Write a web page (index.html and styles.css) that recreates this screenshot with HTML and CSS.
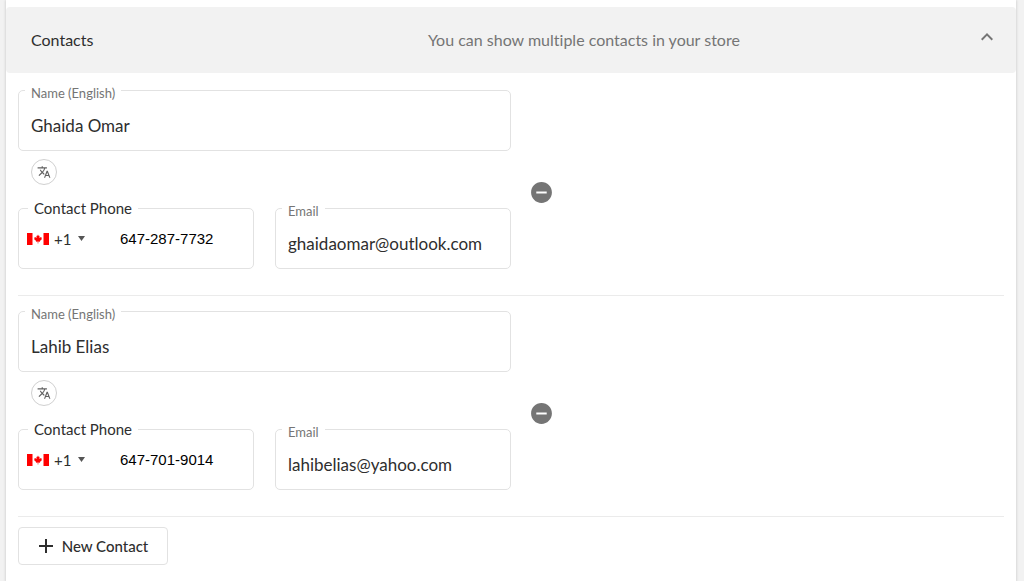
FILE: index.html
```html
<!DOCTYPE html>
<html lang="en">
<head>
    <meta charset="UTF-8">
    <meta name="viewport" content="width=device-width, initial-scale=1.0">
    <title>Store Contacts</title>
    <link rel="stylesheet" href="styles.css">
</head>
<body>
    <!-- Shared icons -->
    <svg class="sprite" aria-hidden="true">
        <symbol id="icon-translate" viewBox="0 0 24 24">
            <path d="M12.87 15.07l-2.54-2.51.03-.03c1.74-1.94 2.98-4.17 3.71-6.53H17V4h-7V2H8v2H1v1.99h11.17C11.5 7.92 10.44 9.75 9 11.35 8.07 10.32 7.3 9.19 6.69 8h-2c.73 1.63 1.73 3.17 2.98 4.56l-5.09 5.02L4 19l5-5 3.11 3.11.76-2.04zM18.5 10h-2L12 22h2l1.12-3h4.75L21 22h2l-4.5-12zm-2.62 7l1.62-4.33L19.12 17h-3.24z"/>
        </symbol>
        <symbol id="icon-remove" viewBox="0 0 24 24">
            <path d="M12 2C6.48 2 2 6.48 2 12s4.48 10 10 10 10-4.48 10-10S17.52 2 12 2zm5 11H7v-2h10v2z"/>
        </symbol>
        <symbol id="flag-ca" viewBox="0 0 22 12">
            <path fill="#fff" d="M0 0h22v12H0z"/>
            <path fill="#f00" d="M0 0h5.5v12H0zM16.5 0H22v12h-5.5z"/>
            <path fill="#f00" d="M11 1.5l.8 1.6.8-.4-.3 2.2 1.1-1 .3.7 1.2-.2-.4 1.3.5.4-2.1 2 .2.700-1.800-.2v2h-.6v-2l-1.800.2.2-.7-2.100-2 .5-.4-.4-1.300 1.200.2.300-.7 1.100 1-.3-2.200.8.4z"/>
        </symbol>
    </svg>

    <main class="panel">
        <header class="panel-header">
            <h2 class="panel-title">Contacts</h2>
            <p class="panel-hint">You can show multiple contacts in your store</p>
            <button class="collapse-btn" type="button" aria-label="Collapse contacts">
                <svg viewBox="0 0 24 24"><path d="M12 8l-6 6 1.41 1.41L12 10.83l4.59 4.58L18 14z"/></svg>
            </button>
        </header>

        <form class="contacts">
            <section class="contact">
                <div class="contact-fields">
                    <div class="field">
                        <label for="name-1">Name (English)</label>
                        <input id="name-1" type="text" value="Ghaida Omar">
                    </div>
                    <button class="translate-btn" type="button" aria-label="Translate name">
                        <svg><use href="#icon-translate"/></svg>
                    </button>
                    <div class="field-row">
                        <div class="field phone">
                            <label for="phone-1">Contact Phone</label>
                            <svg class="flag"><use href="#flag-ca"/></svg>
                            <select aria-label="Country code">
                                <option>+1</option>
                            </select>
                            <svg class="caret" viewBox="0 0 7 5"><path d="M0 0h7L3.5 5z"/></svg>
                            <input id="phone-1" type="tel" value="647-287-7732">
                        </div>
                        <div class="field">
                            <label for="email-1">Email</label>
                            <input id="email-1" type="email" value="ghaidaomar@outlook.com">
                        </div>
                    </div>
                </div>
                <button class="remove-btn" type="button" aria-label="Remove contact">
                    <svg><use href="#icon-remove"/></svg>
                </button>
            </section>

            <section class="contact">
                <div class="contact-fields">
                    <div class="field">
                        <label for="name-2">Name (English)</label>
                        <input id="name-2" type="text" value="Lahib Elias">
                    </div>
                    <button class="translate-btn" type="button" aria-label="Translate name">
                        <svg><use href="#icon-translate"/></svg>
                    </button>
                    <div class="field-row">
                        <div class="field phone">
                            <label for="phone-2">Contact Phone</label>
                            <svg class="flag"><use href="#flag-ca"/></svg>
                            <select aria-label="Country code">
                                <option>+1</option>
                            </select>
                            <svg class="caret" viewBox="0 0 7 5"><path d="M0 0h7L3.5 5z"/></svg>
                            <input id="phone-2" type="tel" value="647-701-9014">
                        </div>
                        <div class="field">
                            <label for="email-2">Email</label>
                            <input id="email-2" type="email" value="lahibelias@yahoo.com">
                        </div>
                    </div>
                </div>
                <button class="remove-btn" type="button" aria-label="Remove contact">
                    <svg><use href="#icon-remove"/></svg>
                </button>
            </section>

            <button class="add-btn" type="button">
                <svg viewBox="0 0 16 16"><path d="M7 1h2v6h6v2H9v6H7V9H1V7h6z"/></svg>
                New Contact
            </button>
        </form>
    </main>
</body>
</html>
```
FILE: styles.css
```css
* {
    box-sizing: border-box;
}
body {
    margin: 0;
    padding: 0 8px 0 6px;
    background: #f2f2f2;
    color: #2e2e2e;
    font-family: Lato, 'Noto Sans', sans-serif;
    font-size: 16px;
    font-variant-ligatures: none;
}
button,
input,
select {
    font: inherit;
    color: inherit;
}
button {
    display: flex;
    align-items: center;
    justify-content: center;
    padding: 0;
    border: none;
    background: none;
    cursor: pointer;
}
svg {
    display: block;
    fill: currentColor;
}
.sprite {
    position: absolute;
    width: 0;
    height: 0;
}
.panel {
    min-height: 100vh;
    padding-top: 7px;
    background: #fff;
    box-shadow: 0 0 3px rgba(0, 0, 0, 0.2);
}
.panel-header {
    display: flex;
    align-items: center;
    height: 66px;
    padding: 0 17px 0 25px;
    border-radius: 4px;
    background: #f2f2f2;
}
.panel-title,
.panel-hint {
    margin: 0;
    padding-bottom: 2px;
    font-size: 16px;
    font-weight: 400;
}
.panel-title {
    flex: 0 0 41%;
}
.panel-hint {
    color: #757575;
}
.collapse-btn {
    margin: 0 0 6px auto;
    color: #757575;
}
.collapse-btn svg {
    width: 24px;
    height: 24px;
}
.contacts {
    padding: 17px 12px;
}
.contact {
    display: flex;
    align-items: center;
    gap: 18px;
    margin-bottom: 15px;
    border-bottom: 1px solid #ebebeb;
}
.contact-fields {
    width: 50%;
    padding-bottom: 26px;
}
.field {
    position: relative;
    display: flex;
    align-items: center;
    min-width: 0;
    height: 61px;
    border: 1px solid #e2e2e2;
    border-radius: 5px;
}
/* Label sits on top of the outline */
.field label {
    position: absolute;
    top: -6px;
    left: 6px;
    padding: 0 6px;
    background: #fff;
    color: #757575;
    font-size: 13px;
    line-height: 16px;
}
.field input {
    width: 100%;
    min-width: 0;
    padding: 10px 12px 0;
    border: none;
    outline: none;
    background: none;
    font-size: 17px;
}
.field-row {
    display: grid;
    grid-template-columns: 1fr 1fr;
    gap: 21px;
}
.translate-btn {
    width: 26px;
    height: 26px;
    margin: 8px 0 23px 13px;
    border: 1px solid #d0d0d0;
    border-radius: 50%;
    color: #616161;
}
.translate-btn svg {
    width: 14px;
    height: 14px;
}
.field.phone {
    padding-left: 8px;
}
.phone label {
    top: -11px;
    left: 9px;
    color: #2e2e2e;
    font-size: 15px;
    line-height: 20px;
}
.phone select {
    flex: none;
    width: 24px;
    margin-left: 5px;
    padding: 0;
    border: none;
    outline: none;
    appearance: none;
    background: none;
    font-size: 15px;
}
.phone input {
    padding: 0 8px 0 35px;
    color: #000;
    font-family: 'Liberation Sans', Arial, sans-serif;
    font-size: 15px;
}
.flag {
    flex: none;
    width: 22px;
    height: 12px;
}
.caret {
    flex: none;
    width: 7px;
    height: 5px;
    color: #555;
}
.remove-btn {
    color: #757575;
}
.remove-btn svg {
    width: 25px;
    height: 25px;
}
.add-btn {
    gap: 8px;
    width: 150px;
    height: 38px;
    margin-top: -5px;
    border: 1px solid #e2e2e2;
    border-radius: 4px;
    font-size: 15px;
    font-weight: 500;
}
.add-btn svg {
    width: 16px;
    height: 16px;
}
```
